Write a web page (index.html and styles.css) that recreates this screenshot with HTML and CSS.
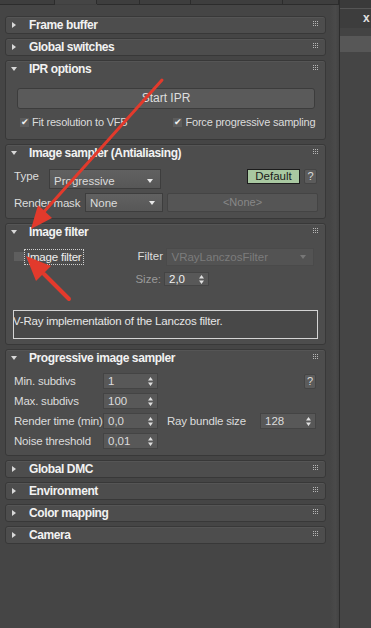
FILE: index.html
```html
<!DOCTYPE html>
<html lang="en">
<head>
    <meta charset="UTF-8">
    <meta name="viewport" content="width=device-width, initial-scale=1.0">
    <title>Render Setup</title>
    <link rel="stylesheet" href="styles.css">
</head>
<body>
    <div class="left">
        <div class="tabs">
            <span class="tab" style="width:55px"></span>
            <span class="tab active" style="width:42px"></span>
            <span class="tab" style="width:42px"></span>
            <span class="tab" style="width:51px"></span>
            <span class="tab" style="width:93px"></span>
            <span class="tab" style="width:56px"></span>
        </div>
        <div class="body">
            <div class="rollouts">

                <div class="rollout">
                    <div class="head"><svg class="tri" viewBox="0 0 6 6"><path d="M1 0 L5 3 L1 6 Z"/></svg><span class="title">Frame buffer</span><svg class="grip" viewBox="0 0 5 5"><path d="M0 0h1v1h-1z M2 0h1v1h-1z M4 0h1v1h-1z M0 2h1v1h-1z M2 2h1v1h-1z M4 2h1v1h-1z M0 4h1v1h-1z M2 4h1v1h-1z M4 4h1v1h-1z"/></svg></div>
                </div>

                <div class="rollout">
                    <div class="head"><svg class="tri" viewBox="0 0 6 6"><path d="M1 0 L5 3 L1 6 Z"/></svg><span class="title">Global switches</span><svg class="grip" viewBox="0 0 5 5"><path d="M0 0h1v1h-1z M2 0h1v1h-1z M4 0h1v1h-1z M0 2h1v1h-1z M2 2h1v1h-1z M4 2h1v1h-1z M0 4h1v1h-1z M2 4h1v1h-1z M4 4h1v1h-1z"/></svg></div>
                </div>

                <!-- IPR options -->
                <div class="rollout">
                    <div class="head"><svg class="tri" viewBox="0 0 6 6"><path d="M0 1 L6 1 L3 5 Z"/></svg><span class="title">IPR options</span><svg class="grip" viewBox="0 0 5 5"><path d="M0 0h1v1h-1z M2 0h1v1h-1z M4 0h1v1h-1z M0 2h1v1h-1z M2 2h1v1h-1z M4 2h1v1h-1z M0 4h1v1h-1z M2 4h1v1h-1z M4 4h1v1h-1z"/></svg></div>
                    <div class="content ipr">
                        <div class="big-btn">Start IPR</div>
                        <div class="check-row">
                            <span class="check on">&#10004;</span><span class="check-label">Fit resolution to VFB</span>
                            <span class="check on second">&#10004;</span><span class="check-label">Force progressive sampling</span>
                        </div>
                    </div>
                </div>

                <!-- Image sampler -->
                <div class="rollout">
                    <div class="head"><svg class="tri" viewBox="0 0 6 6"><path d="M0 1 L6 1 L3 5 Z"/></svg><span class="title">Image sampler (Antialiasing)</span><svg class="grip" viewBox="0 0 5 5"><path d="M0 0h1v1h-1z M2 0h1v1h-1z M4 0h1v1h-1z M0 2h1v1h-1z M2 2h1v1h-1z M4 2h1v1h-1z M0 4h1v1h-1z M2 4h1v1h-1z M4 4h1v1h-1z"/></svg></div>
                    <div class="content sampler">
                        <div class="row row-type">
                            <span class="label type-label">Type</span>
                            <div class="drop type-drop">Progressive<svg class="dd" viewBox="0 0 6 4"><path d="M0 0 L6 0 L3 4 Z"/></svg></div>
                            <div class="default-btn">Default</div>
                            <div class="help">?</div>
                        </div>
                        <div class="row row-mask">
                            <span class="label mask-label">Render mask</span>
                            <div class="drop mask-drop">None<svg class="dd" viewBox="0 0 6 4"><path d="M0 0 L6 0 L3 4 Z"/></svg></div>
                            <div class="none-btn">&lt;None&gt;</div>
                        </div>
                    </div>
                </div>

                <!-- Image filter -->
                <div class="rollout">
                    <div class="head"><svg class="tri" viewBox="0 0 6 6"><path d="M0 1 L6 1 L3 5 Z"/></svg><span class="title">Image filter</span><svg class="grip" viewBox="0 0 5 5"><path d="M0 0h1v1h-1z M2 0h1v1h-1z M4 0h1v1h-1z M0 2h1v1h-1z M2 2h1v1h-1z M4 2h1v1h-1z M0 4h1v1h-1z M2 4h1v1h-1z M4 4h1v1h-1z"/></svg></div>
                    <div class="content filter">
                        <div class="row row-filter">
                            <span class="box-off"></span>
                            <span class="focus-label">Image filter</span>
                            <span class="label filter-label">Filter</span>
                            <div class="drop disabled filter-drop">VRayLanczosFilter<svg class="dd" viewBox="0 0 6 4"><path d="M0 0 L6 0 L3 4 Z"/></svg></div>
                        </div>
                        <div class="row row-size">
                            <span class="label dim size-label">Size:</span>
                            <div class="spin size-spin">2,0<svg class="sp" viewBox="0 0 5 9"><path d="M0 3.5 L2.5 0 L5 3.5 Z M0 5.5 L5 5.5 L2.5 9 Z"/></svg></div>
                        </div>
                        <div class="desc">V-Ray implementation of the Lanczos filter.</div>
                    </div>
                </div>

                <!-- Progressive image sampler -->
                <div class="rollout">
                    <div class="head"><svg class="tri" viewBox="0 0 6 6"><path d="M0 1 L6 1 L3 5 Z"/></svg><span class="title">Progressive image sampler</span><svg class="grip" viewBox="0 0 5 5"><path d="M0 0h1v1h-1z M2 0h1v1h-1z M4 0h1v1h-1z M0 2h1v1h-1z M2 2h1v1h-1z M4 2h1v1h-1z M0 4h1v1h-1z M2 4h1v1h-1z M4 4h1v1h-1z"/></svg></div>
                    <div class="content prog">
                        <div class="row prow">
                            <span class="label plabel">Min. subdivs</span>
                            <div class="spin pspin">1<svg class="sp" viewBox="0 0 5 9"><path d="M0 3.5 L2.5 0 L5 3.5 Z M0 5.5 L5 5.5 L2.5 9 Z"/></svg></div>
                            <div class="help small">?</div>
                        </div>
                        <div class="row prow">
                            <span class="label plabel">Max. subdivs</span>
                            <div class="spin pspin">100<svg class="sp" viewBox="0 0 5 9"><path d="M0 3.5 L2.5 0 L5 3.5 Z M0 5.5 L5 5.5 L2.5 9 Z"/></svg></div>
                        </div>
                        <div class="row prow">
                            <span class="label plabel">Render time (min)</span>
                            <div class="spin pspin">0,0<svg class="sp" viewBox="0 0 5 9"><path d="M0 3.5 L2.5 0 L5 3.5 Z M0 5.5 L5 5.5 L2.5 9 Z"/></svg></div>
                            <span class="label ray-label">Ray bundle size</span>
                            <div class="spin ray-spin">128<svg class="sp" viewBox="0 0 5 9"><path d="M0 3.5 L2.5 0 L5 3.5 Z M0 5.5 L5 5.5 L2.5 9 Z"/></svg></div>
                        </div>
                        <div class="row prow">
                            <span class="label plabel">Noise threshold</span>
                            <div class="spin pspin">0,01<svg class="sp" viewBox="0 0 5 9"><path d="M0 3.5 L2.5 0 L5 3.5 Z M0 5.5 L5 5.5 L2.5 9 Z"/></svg></div>
                        </div>
                    </div>
                </div>

                <div class="rollout">
                    <div class="head"><svg class="tri" viewBox="0 0 6 6"><path d="M1 0 L5 3 L1 6 Z"/></svg><span class="title">Global DMC</span><svg class="grip" viewBox="0 0 5 5"><path d="M0 0h1v1h-1z M2 0h1v1h-1z M4 0h1v1h-1z M0 2h1v1h-1z M2 2h1v1h-1z M4 2h1v1h-1z M0 4h1v1h-1z M2 4h1v1h-1z M4 4h1v1h-1z"/></svg></div>
                </div>
                <div class="rollout">
                    <div class="head"><svg class="tri" viewBox="0 0 6 6"><path d="M1 0 L5 3 L1 6 Z"/></svg><span class="title">Environment</span><svg class="grip" viewBox="0 0 5 5"><path d="M0 0h1v1h-1z M2 0h1v1h-1z M4 0h1v1h-1z M0 2h1v1h-1z M2 2h1v1h-1z M4 2h1v1h-1z M0 4h1v1h-1z M2 4h1v1h-1z M4 4h1v1h-1z"/></svg></div>
                </div>
                <div class="rollout">
                    <div class="head"><svg class="tri" viewBox="0 0 6 6"><path d="M1 0 L5 3 L1 6 Z"/></svg><span class="title">Color mapping</span><svg class="grip" viewBox="0 0 5 5"><path d="M0 0h1v1h-1z M2 0h1v1h-1z M4 0h1v1h-1z M0 2h1v1h-1z M2 2h1v1h-1z M4 2h1v1h-1z M0 4h1v1h-1z M2 4h1v1h-1z M4 4h1v1h-1z"/></svg></div>
                </div>
                <div class="rollout">
                    <div class="head"><svg class="tri" viewBox="0 0 6 6"><path d="M1 0 L5 3 L1 6 Z"/></svg><span class="title">Camera</span><svg class="grip" viewBox="0 0 5 5"><path d="M0 0h1v1h-1z M2 0h1v1h-1z M4 0h1v1h-1z M0 2h1v1h-1z M2 2h1v1h-1z M4 2h1v1h-1z M0 4h1v1h-1z M2 4h1v1h-1z M4 4h1v1h-1z"/></svg></div>
                </div>
            </div>
            <div class="scroll"></div>
        </div>
    </div>

    <div class="side">
        <div class="side-top"></div>
        <div class="side-title">x</div>
        <div class="side-gap"></div>
        <div class="side-band"></div>
    </div>

    <!-- red annotation arrows drawn over the screenshot -->
    <svg class="arrows" viewBox="0 0 371 628" width="371" height="628">
        <line x1="162" y1="80" x2="42" y2="214" stroke="#e23a2c" stroke-width="3" stroke-linecap="round"/>
        <polygon points="31,229 52,218 38,205" fill="#e23a2c"/>
        <line x1="69" y1="299" x2="44" y2="274" stroke="#e23a2c" stroke-width="4" stroke-linecap="round"/>
        <polygon points="26,256 51,266 36,281" fill="#e23a2c"/>
    </svg>
</body>
</html>
```

FILE: styles.css
```css
body {
    margin: 0;
    width: 371px;
    height: 628px;
    overflow: hidden;
    display: flex;
    background-color: #454545;
    font-family: "Liberation Sans", Arial, sans-serif;
    font-size: 11px;
    color: #dcdcdc;
    position: relative;
}

/* Left part: tab strip and rollouts */
.left {
    width: 339px;
    display: flex;
    flex-direction: column;
}
.tabs {
    height: 5px;
    display: flex;
    background-color: #3e3e3e;
}
.tab {
    height: 4px;
    border-right: 1px solid #2c2c2c;
    border-bottom: 1px solid #2c2c2c;
    box-sizing: content-box;
}
.tab.active {
    border-bottom: none;
    background-color: #454545;
}
.body {
    flex: 1;
    display: flex;
}
.rollouts {
    width: 321px;
    padding: 11px 4px 0 5px;
}
.scroll {
    width: 9px;
    background: linear-gradient(to right, #454545, #4a4a4a 60%, #434343);
}

/* Rollout panels */
.rollout {
    border: 1px solid #383838;
    border-radius: 3px;
    background-color: #4d4d4d;
    margin-bottom: 4px;
    box-shadow: inset 0 1px 0 #555;
}
.head {
    height: 16px;
    display: flex;
    align-items: center;
    padding: 0 7px 0 5px;
}
.tri {
    width: 6px;
    height: 6px;
    fill: #d8d8d8;
    margin-right: 12px;
    flex-shrink: 0;
}
.title {
    font-weight: bold;
    font-size: 12px;
    letter-spacing: -0.4px;
    color: #f2f2f2;
    flex: 1;
    white-space: nowrap;
}
.grip {
    width: 5px;
    height: 5px;
    fill: #b8b8b8;
    margin-top: -4px;
    flex-shrink: 0;
}
.content {
    padding: 0 8px;
}
.row {
    display: flex;
    align-items: center;
}
.row > * {
    flex-shrink: 0;
}
.label {
    white-space: nowrap;
}
.dim {
    color: #9a9a9a;
}

/* IPR options */
.ipr {
    padding-top: 11px;
    padding-bottom: 11px;
}
.big-btn {
    margin-left: 3px;
    width: 296px;
    height: 19px;
    line-height: 19px;
    text-align: center;
    border: 1px solid #3c3c3c;
    border-radius: 3px;
    background-color: #5a5a5a;
    color: #dedede;
    font-size: 12px;
}
.check-row {
    margin-top: 7px;
    height: 12px;
    display: flex;
    align-items: center;
    white-space: nowrap;
}
.check {
    flex-shrink: 0;
    width: 9px;
    height: 9px;
    background-color: #5c5c5c;
    color: #f0f0f0;
    font-size: 9px;
    line-height: 9px;
    text-align: center;
    margin-left: 6px;
    margin-right: 3px;
}
.check.second {
    margin-left: 46px;
}
.check-label {
    font-size: 11px;
    letter-spacing: -0.2px;
    flex-shrink: 0;
}

/* Drop downs and spinners */
.drop {
    position: relative;
    box-sizing: border-box;
    border: 1px solid #3d3d3d;
    background: linear-gradient(#616161, #575757);
    padding-left: 4px;
    display: flex;
    align-items: center;
    font-size: 11.5px;
    white-space: nowrap;
}
.drop.disabled {
    background: #535353;
    border-color: #4a4a4a;
    color: #7c7c7c;
}
.dd {
    width: 6px;
    height: 4px;
    fill: #e8e8e8;
    margin-left: auto;
    margin-right: 7px;
}
.disabled .dd {
    fill: #777;
}
.spin {
    box-sizing: border-box;
    height: 16px;
    border: 1px solid #444;
    background-color: #585858;
    padding-left: 4px;
    display: flex;
    align-items: center;
    font-size: 11.5px;
}
.sp {
    width: 5px;
    height: 9px;
    fill: #e0e0e0;
    margin-left: auto;
    margin-right: 4px;
}
.help {
    box-sizing: border-box;
    width: 13px;
    height: 15px;
    border-radius: 2px;
    background-color: #5b5b5b;
    border: 1px solid #444;
    text-align: center;
    line-height: 13px;
    margin-left: 4px;
}

/* Image sampler */
.sampler {
    padding-top: 8px;
    padding-bottom: 6px;
}
.row-type {
    height: 20px;
    align-items: flex-start;
}
.type-label {
    width: 35px;
    padding-top: 1px;
    font-size: 11.5px;
}
.type-drop {
    width: 112px;
    height: 20px;
    padding-top: 3px;
}
.default-btn {
    box-sizing: border-box;
    margin-left: auto;
    width: 53px;
    height: 15px;
    border: 1px solid #1c1c1c;
    background-color: #a9c8a1;
    color: #1a1a1a;
    text-align: center;
    line-height: 13px;
    font-size: 11.5px;
}
.row-mask {
    margin-top: 4px;
    height: 19px;
}
.mask-label {
    width: 71px;
    font-size: 11.5px;
    letter-spacing: -0.2px;
}
.mask-drop {
    width: 78px;
    height: 19px;
}
.none-btn {
    box-sizing: border-box;
    margin-left: 4px;
    width: 151px;
    height: 19px;
    line-height: 17px;
    border: 1px solid #444;
    border-radius: 2px;
    background-color: #555;
    color: #888;
    text-align: center;
}

/* Image filter */
.filter {
    padding-top: 8px;
    padding-bottom: 5px;
}
.row-filter {
    height: 18px;
}
.box-off {
    width: 10px;
    height: 9px;
    background-color: #5e5e5e;
    margin-top: -2px;
}
.focus-label {
    border: 1px dotted #d0d0d0;
    padding: 0 2px 0 2px;
    line-height: 14px;
    font-size: 11.5px;
    letter-spacing: -0.2px;
    color: #f0f0f0;
    white-space: nowrap;
}
.filter-label {
    margin-left: 53px;
    width: 29px;
    font-size: 11.5px;
    margin-top: -3px;
}
.filter-drop {
    width: 148px;
    height: 18px;
}
.row-size {
    margin-top: 6px;
    height: 14px;
}
.size-label {
    width: 150px;
    text-align: right;
    padding-right: 3px;
    box-sizing: border-box;
    font-size: 11.5px;
}
.size-spin {
    width: 45px;
    height: 14px;
    color: #f0f0f0;
}
.desc {
    margin-top: 24px;
    margin-left: -1px;
    box-sizing: border-box;
    width: 305px;
    height: 29px;
    border: 1px solid #d4d4d4;
    background-color: #484848;
    padding: 4px 0 0 0;
    font-size: 11.5px;
    letter-spacing: -0.2px;
    text-indent: -1px;
    color: #e6e6e6;
    overflow: hidden;
    white-space: nowrap;
}

/* Progressive image sampler */
.prog {
    padding-top: 7px;
    padding-bottom: 6px;
}
.prow {
    height: 16px;
    margin-bottom: 4px;
}
.prow:last-child {
    margin-bottom: 0;
}
.plabel {
    width: 89px;
    font-size: 11.5px;
    letter-spacing: -0.2px;
}
.pspin {
    width: 55px;
}
.help.small {
    margin-left: auto;
    margin-right: 1px;
    width: 12px;
}
.ray-label {
    margin-left: 9px;
    width: 93px;
    font-size: 11.5px;
    letter-spacing: -0.2px;
}
.ray-spin {
    width: 56px;
}

/* Right side pane */
.side {
    width: 31px;
    border-left: 1px solid #2d2d2d;
    background-color: #454545;
    display: flex;
    flex-direction: column;
}
.side-top {
    height: 8px;
    background-color: #3a3a3a;
    border-bottom: 1px solid #555;
}
.side-title {
    height: 19px;
    background-color: #3d3d3d;
    color: #e0e0e0;
    font-weight: bold;
    font-size: 12px;
    line-height: 19px;
    padding-left: 23px;
    overflow: hidden;
}
.side-gap {
    height: 8px;
    background-color: #434343;
}
.side-band {
    height: 16px;
    background-color: #575757;
}

/* Annotation overlay */
.arrows {
    position: absolute;
    left: 0;
    top: 0;
    pointer-events: none;
}
```
